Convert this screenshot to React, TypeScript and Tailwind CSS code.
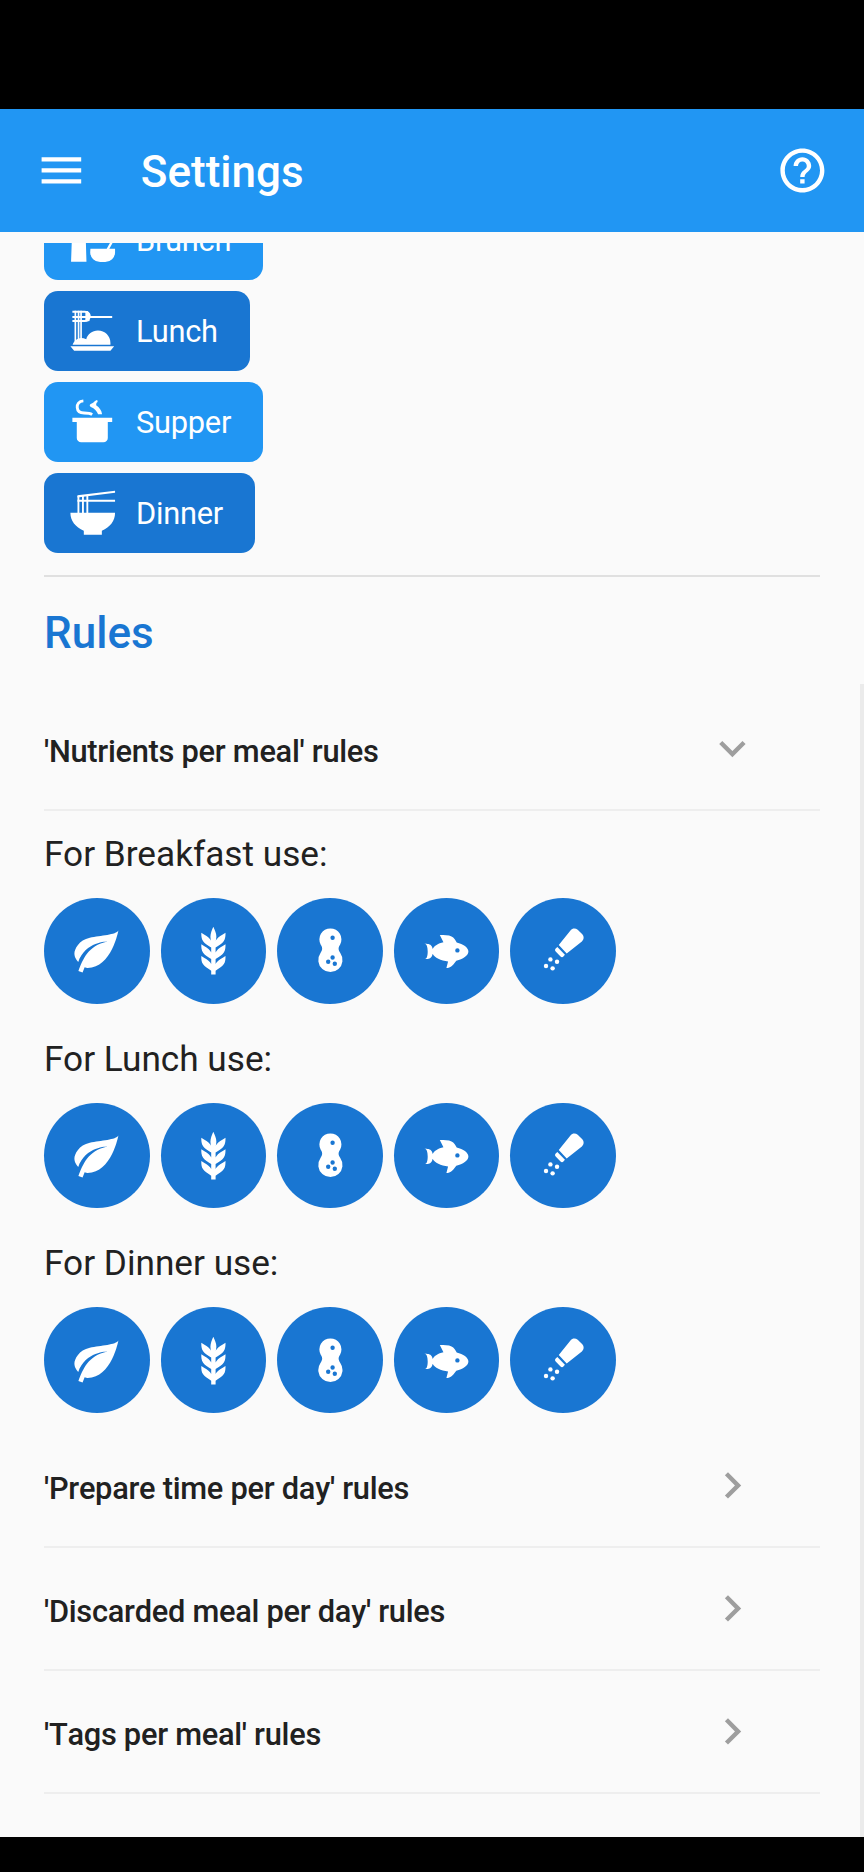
import type { ReactNode } from "react";
import { MdMenu, MdHelpOutline, MdExpandMore, MdChevronRight } from "react-icons/md";

function Icon({ children }: { children: ReactNode }) {
  return (
    <svg viewBox="0 0 24 24" className="size-[52.8px] shrink-0 text-white" fill="currentColor">
      {children}
    </svg>
  );
}

const BrunchIcon = () => (
  <Icon>
    <path d="M3 2h5.7l.6 20.2H2.3zM11.1 16.2h7.4l4-7 .9.5-3.7 6.5h2.6v1.7a4.5 4.5 0 0 1-4.5 4.4h-2.3a4.5 4.5 0 0 1-4.5-4.4z" />
  </Icon>
);

const LunchIcon = () => (
  <Icon>
    <path d="M2 19.2h19.9l-1.7 2.1H3.7zM3 18.5c.6-1.5 1.9-2.9 3.9-3 .8 0 1.5.2 2.3.5.6-2.2 2.7-3.9 5.3-3.9 3.2 0 5.7 2.5 5.7 5.6v.8z" />
    <path
      d="M2.9 3.5H8.6a2.2 2.2 0 0 1 2.2 2.1A2.2 2.1 0 0 1 8.6 7.7H2.9M2.9 5.9H21"
      fill="none"
      stroke="currentColor"
      strokeWidth=".95"
    />
    <path d="M8.8 3.2h1.1l.8 1v3.5l-1.9.4z" />
    <path d="M4.25 3.1v13.9M5.7 3.1v13M6.85 3.1v13" fill="none" stroke="currentColor" strokeWidth=".75" />
  </Icon>
);

const SupperIcon = () => (
  <Icon>
    <path d="M2.9 10.3H21v2h-2v7.2a2 2 0 0 1-2 2H6.9a2 2 0 0 1-2-2v-7.2h-2z" />
    <path
      d="M7.9 2.65C5.8 2.8 5 4.2 5.1 5.6c.1 1.8 1.4 2.6 3.2 2.6 1.5 0 2.7.1 3.6.7"
      fill="none"
      stroke="currentColor"
      strokeWidth="1.3"
    />
    <path d="M14.2 2.3C12.9 2.5 12.8 3.7 11.2 4.1c-.6.3-.5 1 .1 1.3 1.7.7 2.7 1.7 3.3 3.4h1.8c-.2-1.7-1.2-3.1-2.7-4.1.1-1 .1-1.2.7-1.5z" />
  </Icon>
);

const DinnerIcon = () => (
  <Icon>
    <path d="M2 12.15h20.3c0 3.6-2.2 6.6-6 8.2v1.85H8.1v-1.85C4.3 18.75 2 15.75 2 12.15zM5.2 4.2l17.1-2v.9L5.2 5.2zM5.2 6.25h17.1v.9H5.2z" />
    <path d="M5.65 4.5v8M7.7 4.5v8M9.7 4.5v8" fill="none" stroke="currentColor" strokeWidth=".85" />
  </Icon>
);

const LeafIcon = () => (
  <Icon>
    <path d="M17,8C8,10 5.9,16.17 3.82,21.34L5.71,22L6.66,19.7C7.14,19.87 7.64,20 8,20C19,20 22,3 22,3C21,5 14,5.25 9,6.25C4,7.25 2,11.5 2,13.5C2,15.5 3.75,17.25 3.75,17.25C7,8 17,8 17,8Z" />
  </Icon>
);

const BarleyIcon = () => (
  <Icon>
    <path d="M7.33,18.33C6.5,17.17 6.5,15.83 6.5,14.5C8.17,15.5 9.83,16.5 10.67,17.67L11,18.23V15.95C9.5,15.05 8.08,14.13 7.33,13.08C6.5,11.92 6.5,10.58 6.5,9.25C8.17,10.25 9.83,11.25 10.67,12.42L11,13V10.7C9.5,9.8 8.08,8.88 7.33,7.83C6.5,6.67 6.5,5.33 6.5,4C8.17,5 9.83,6 10.67,7.17C10.77,7.31 10.86,7.46 10.94,7.62C10.77,7 10.66,6.42 10.65,5.82C10.64,4.31 11.3,2.76 11.96,1.21C12.65,2.69 13.34,4.18 13.35,5.69C13.36,6.32 13.25,6.96 13.07,7.59C13.15,7.45 13.23,7.31 13.33,7.17C14.17,6 15.83,5 17.5,4C17.5,5.33 17.5,6.67 16.67,7.83C15.92,8.88 14.5,9.8 13,10.7V13L13.33,12.42C14.17,11.25 15.83,10.25 17.5,9.25C17.5,10.58 17.5,11.92 16.67,13.08C15.92,14.13 14.5,15.05 13,15.95V18.23L13.33,17.67C14.17,16.5 15.83,15.5 17.5,14.5C17.5,15.83 17.5,17.17 16.67,18.33C15.92,19.38 14.5,20.3 13,21.2V23H11V21.2C9.5,20.3 8.08,19.38 7.33,18.33Z" />
  </Icon>
);

const PeanutIcon = () => (
  <Icon>
    <path
      fillRule="evenodd"
      d="M12 2a5 5 0 0 1 4.4 7.4c-.9 1.4-.9 2.2.1 3.8A5.5 5.5 0 1 1 7.5 13.2c1-1.6 1-2.4.1-3.8A5 5 0 0 1 12 2zM13 5.25a1 1 0 1 0 0 2 1 1 0 0 0 0-2zM13 14.2a1 1 0 1 0 0 2 1 1 0 0 0 0-2zM11 16.15a1 1 0 1 0 0 2 1 1 0 0 0 0-2zM14 17.05a1 1 0 1 0 0 2 1 1 0 0 0 0-2z"
    />
  </Icon>
);

const FishIcon = () => (
  <Icon>
    <path d="M12,20L12.76,17C9.5,16.79 6.59,15.4 5.75,13.58C5.66,14.06 5.53,14.5 5.33,14.83C4.67,16 3.33,16 2,16C3.1,16 3.5,14.43 3.5,12.5C3.5,10.57 3.1,9 2,9C3.33,9 4.67,9 5.33,10.17C5.53,10.5 5.66,10.94 5.75,11.42C6.4,10 8.32,8.85 10.66,8.32L9,5C11,5 13,5 14.33,5.67C15.46,6.23 16.11,7.27 16.69,8.38C19.61,9.08 22,10.66 22,12.5C22,14.38 19.5,16 16.5,16.66C15.67,17.76 14.86,18.78 14.17,19.33C13.33,20 12.67,20 12,20M17,11A1,1 0 0,0 16,12A1,1 0 0,0 17,13A1,1 0 0,0 18,12A1,1 0 0,0 17,11Z" />
  </Icon>
);

const ShakerIcon = () => (
  <Icon>
    <path d="M9.9 9.6 15.3 2.8C16.1 1.8 17.5 1.75 18.5 2.6L20.6 4.7C21.5 5.7 21.4 7.1 20.4 7.9L13.5 13.4zM9.25 10.4 12.7 14 12.1 14.7C11.7 15.2 11.1 15.2 10.7 14.8L8.5 12.5C8.1 12.1 8.1 11.5 8.5 11.1z" />
    <circle cx="6.1" cy="16.1" r="1" />
    <circle cx="4.1" cy="19.1" r="1" />
    <circle cx="9.1" cy="17.15" r="1" />
    <circle cx="7.1" cy="20.15" r="1" />
  </Icon>
);

const meals = [
  { name: "Brunch", icon: <BrunchIcon />, style: "bg-[#2196f3] w-[219px]" },
  { name: "Lunch", icon: <LunchIcon />, style: "bg-[#1976d2] w-[205.7px]" },
  { name: "Supper", icon: <SupperIcon />, style: "bg-[#2196f3] w-[218.6px]" },
  { name: "Dinner", icon: <DinnerIcon />, style: "bg-[#1976d2] w-[210.7px]" },
];

const nutrients = [
  { name: "Vegetables", icon: <LeafIcon /> },
  { name: "Grains", icon: <BarleyIcon /> },
  { name: "Legumes", icon: <PeanutIcon /> },
  { name: "Fish", icon: <FishIcon /> },
  { name: "Spices", icon: <ShakerIcon /> },
];

function RuleHeader({ title, open = false }: { title: string; open?: boolean }) {
  const Chevron = open ? MdExpandMore : MdChevronRight;
  return (
    <button className="flex h-[123.2px] w-full shrink-0 items-center justify-between border-b-2 border-[#eeeeee] pr-[61.6px] text-left">
      <span className="pt-[7px] text-[30.8px] leading-9 font-medium tracking-[-0.27px] [font-kerning:none]">
        {title}
      </span>
      <Chevron className="size-[52.8px] text-[#9e9e9e]" />
    </button>
  );
}

function NutrientGroup({ meal }: { meal: string }) {
  return (
    <section className="h-[204.6px] shrink-0">
      <h3 className="flex h-[87px] items-center pb-[0.8px] text-[35.2px] leading-10">For {meal} use:</h3>
      <div className="flex gap-[11px]">
        {nutrients.map((n) => (
          <button
            key={n.name}
            className="flex size-[105.6px] items-center justify-center rounded-full bg-[#1976d2]"
          >
            {n.icon}
          </button>
        ))}
      </div>
    </section>
  );
}

export default function App() {
  return (
    <div className="flex h-[1872px] w-[864px] flex-col overflow-hidden bg-[#fafafa] font-[Roboto,sans-serif] text-[#212121]">
      <div className="h-[109px] shrink-0 bg-black" />
      <header className="flex h-[123px] shrink-0 items-center bg-[#2196f3] px-[35.2px] text-white">
        <MdMenu className="size-[52.8px]" />
        <h1 className="ml-[52.8px] flex-1 pt-[2px] text-[44px] leading-none font-medium">Settings</h1>
        <MdHelpOutline className="size-[52.8px]" />
      </header>

      <main className="flex min-h-0 flex-1 pt-[10.5px]">
        <div className="flex w-[864px] min-w-0 flex-col overflow-hidden px-[44px]">
          <div className="-mt-[43px] flex shrink-0 flex-col items-start gap-[11px]">
            {meals.map((m) => (
              <button
                key={m.name}
                className={`flex h-[80px] items-center gap-[17.2px] rounded-[14px] pl-[22px] text-[30.8px] tracking-[-0.25px] text-white ${m.style}`}
              >
                {m.icon}
                <span className="pt-[2px] leading-9">{m.name}</span>
              </button>
            ))}
          </div>
          <hr className="mt-[22px] shrink-0 border-0 border-t-2 border-[#e0e0e0]" />
          <h2 className="flex h-[111.4px] shrink-0 items-center pt-[1px] text-[44px] leading-none font-medium text-[#1976d2]">
            Rules
          </h2>
          <RuleHeader title="'Nutrients per meal' rules" open />
          <NutrientGroup meal="Breakfast" />
          <NutrientGroup meal="Lunch" />
          <NutrientGroup meal="Dinner" />
          <RuleHeader title="'Prepare time per day' rules" />
          <RuleHeader title="'Discarded meal per day' rules" />
          <RuleHeader title="'Tags per meal' rules" />
        </div>
        <div className="-ml-1 mt-[441.5px] w-1 shrink-0 bg-[#ebebeb]" />
      </main>
      <div className="h-[35px] shrink-0 bg-black" />
    </div>
  );
}
